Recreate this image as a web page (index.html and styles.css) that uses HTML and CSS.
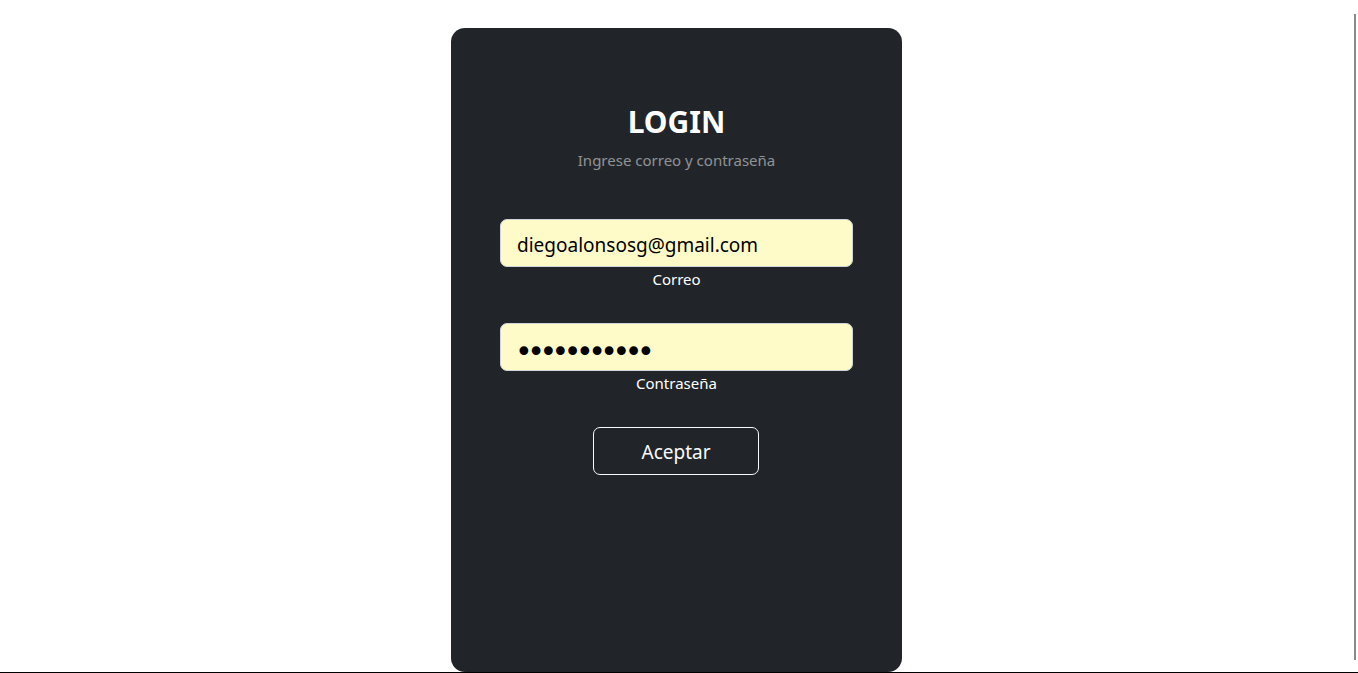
FILE: index.html
```html
<!DOCTYPE html>
<html lang="es">
<head>
<meta charset="utf-8">
<title>Login</title>
<link rel="stylesheet" href="styles.css">
</head>
<body>
<main class="page">
  <section class="card">
    <h2 class="title">LOGIN</h2>
    <p class="subtitle">Ingrese correo y contraseña</p>
    <form class="form">
      <div class="field">
        <input class="input" type="email" id="correo" value="diegoalonsosg@gmail.com">
        <label class="label" for="correo">Correo</label>
      </div>
      <div class="field">
        <input class="input input-pass" type="password" id="pass" value="12345678901">
        <label class="label" for="pass">Contraseña</label>
      </div>
      <button class="btn" type="button">Aceptar</button>
    </form>
  </section>
</main>
<div class="edge-right"></div>
<div class="edge-bottom"></div>
</body>
</html>
```
FILE: styles.css
```css
* { box-sizing: border-box; }
html, body { margin: 0; padding: 0; }
body {
  background: #fff;
  font-family: "Noto Sans", "Open Sans", sans-serif;
  overflow: hidden;
}
.page {
  display: flex;
  justify-content: center;
  padding: 28px 5px 0 0;
}
.card {
  width: 451px;
  height: 644px;
  background: #212529;
  border-radius: 14px;
  padding: 75px 49px 0;
  display: flex;
  flex-direction: column;
  align-items: center;
  text-align: center;
}
.title {
  margin: 0 0 7px;
  font-size: 30px;
  line-height: 38px;
  font-weight: 700;
  color: #fff;
}
.subtitle {
  margin: 0 0 47px;
  font-size: 15px;
  line-height: 24px;
  color: rgba(255,255,255,.5);
}
.form {
  width: 100%;
  display: flex;
  flex-direction: column;
  align-items: center;
}
.field {
  width: 100%;
  display: flex;
  flex-direction: column;
  margin-bottom: 32px;
}
.input {
  width: 100%;
  height: 48px;
  padding: 10px 16px 6px;
  font-family: inherit;
  font-size: 19px;
  line-height: 30px;
  color: #000;
  background: #fffbc8;
  border: 1px solid #ced4da;
  border-radius: 7px;
  outline: none;
}
.input-pass {
  font-family: "DejaVu Sans", sans-serif;
  font-size: 30px;
  letter-spacing: -5.5px;
  padding: 12px 14px 4px;
}
.label {
  margin-top: 1px;
  font-size: 15px;
  line-height: 23px;
  color: #fff;
}
.btn {
  width: 166px;
  height: 48px;
  margin-right: 1px;
  font-family: inherit;
  font-size: 19px;
  padding-top: 2px;
  color: #f8f9fa;
  background: transparent;
  border: 1px solid #f8f9fa;
  border-radius: 7px;
}
.edge-right {
  position: fixed;
  left: 1354px;
  top: 14px;
  width: 2px;
  height: 646px;
  background: #8a8a8a;
}
.edge-bottom {
  position: fixed;
  left: 0;
  right: 0;
  top: 672px;
  height: 1px;
  background: #000;
}
```
